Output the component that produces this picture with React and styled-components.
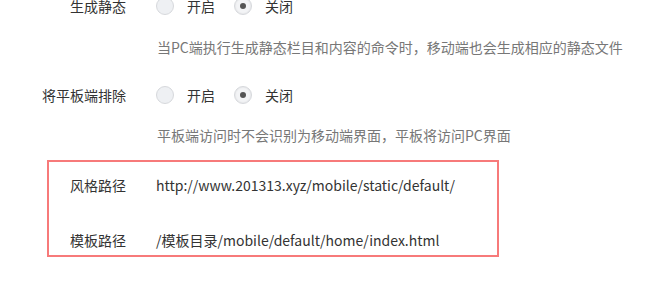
import React from 'react';
import styled, { createGlobalStyle } from 'styled-components';

const GlobalStyle = createGlobalStyle`
    html, body {
        margin: 0;
        padding: 0;
        background: #fff;
        overflow: hidden;
    }
    body {
        font-family: "Noto Sans CJK SC", "Noto Sans", sans-serif;
        font-size: 14px;
        color: #333;
    }
`;

const Page = styled.div`
    width: 657px;
    height: 295px;
    padding-top: 0;
    box-sizing: border-box;
`;

const FormRow = styled.div`
    display: flex;
    align-items: center;
    height: 20px;
    margin-top: ${({ top }) => top}px;
`;

const Label = styled.div`
    width: ${({ width }) => width}px;
    flex-shrink: 0;
    text-align: right;
    line-height: 20px;
    color: #333;
`;

const Control = styled.div`
    display: flex;
    align-items: center;
    margin-left: 30px;
    line-height: 20px;
`;

const RadioItem = styled.label`
    display: flex;
    align-items: center;
    margin-right: 19px;
    color: #333;
`;

const RadioCircle = styled.span`
    width: 16px;
    height: 16px;
    border-radius: 50%;
    border: 1px solid #d6d8dc;
    background: ${({ checked }) => (checked ? '#f3f4f6' : '#eef0f3')};
    box-shadow: ${({ checked }) => (checked ? 'inset 0 0 2px rgba(0,0,0,0.12)' : 'none')};
    display: flex;
    align-items: center;
    justify-content: center;
    margin-right: 13px;

    &::after {
        content: '';
        display: ${({ checked }) => (checked ? 'block' : 'none')};
        width: 6px;
        height: 6px;
        border-radius: 50%;
        background: #555;
    }
`;

const Help = styled.div`
    margin-top: ${({ top }) => top}px;
    margin-left: 157px;
    line-height: 20px;
    color: #777;
`;

const PathBox = styled.div`
    margin: 15px 0 0 47px;
    width: 452px;
    height: 97px;
    box-sizing: border-box;
    border: 2px solid #f77a7a;
    padding-top: 13px;
`;

const Value = styled.div`
    margin-left: 30px;
    line-height: 20px;
    color: #333;
`;

const Radio = ({ options, value }) => (
    <Control>
        {options.map((opt) => (
            <RadioItem key={opt}>
                <RadioCircle checked={opt === value} />
                {opt}
            </RadioItem>
        ))}
    </Control>
);

const App = () => (
    <Page>
        <GlobalStyle />
        <FormRow top={-4}>
            <Label width={126}>生成静态</Label>
            <Radio options={['开启', '关闭']} value="关闭" />
        </FormRow>
        <Help top={21}>当PC端执行生成静态栏目和内容的命令时，移动端也会生成相应的静态文件</Help>
        <FormRow top={28}>
            <Label width={126}>将平板端排除</Label>
            <Radio options={['开启', '关闭']} value="关闭" />
        </FormRow>
        <Help top={20}>平板端访问时不会识别为移动端界面，平板将访问PC界面</Help>
        <PathBox>
            <FormRow top={0}>
                <Label width={77}>风格路径</Label>
                <Value>http://www.201313.xyz/mobile/static/default/</Value>
            </FormRow>
            <FormRow top={35}>
                <Label width={77}>模板路径</Label>
                <Value>/模板目录/mobile/default/home/index.html</Value>
            </FormRow>
        </PathBox>
    </Page>
);

export default App;
